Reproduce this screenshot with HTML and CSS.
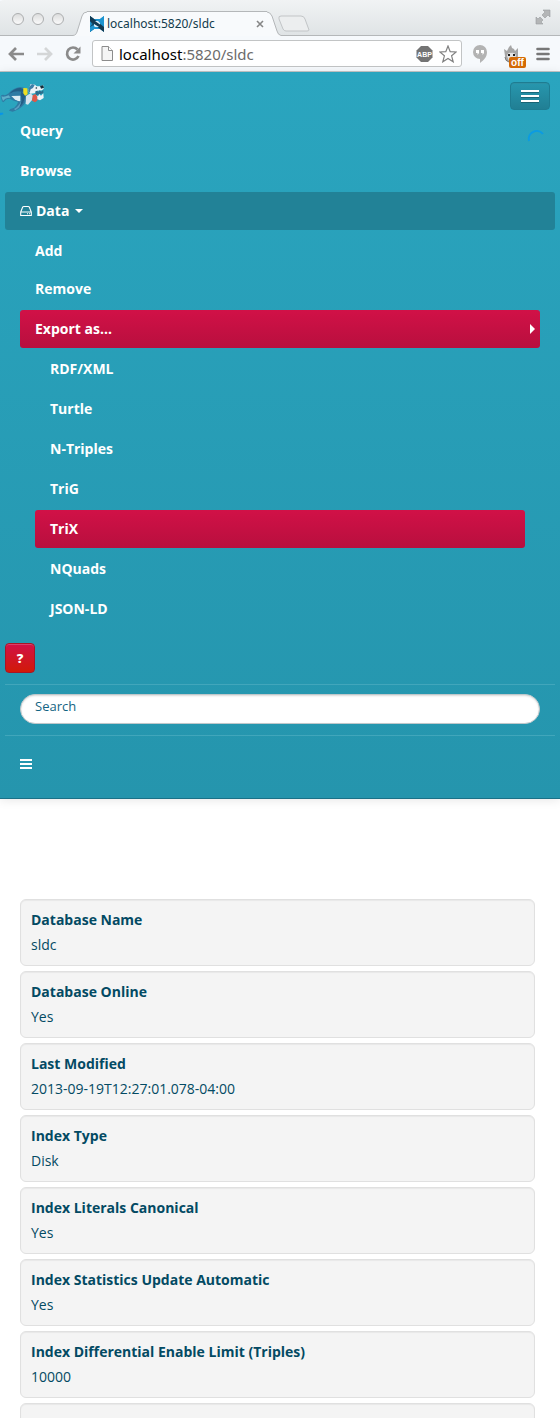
FILE: index.html
```html
<!DOCTYPE html>
<html lang="en">
<head>
<meta charset="utf-8">
<meta name="viewport" content="width=device-width, initial-scale=1">
<title>localhost:5820/sldc</title>
<link rel="stylesheet" href="styles.css">
</head>
<body>
<header class="chrome">
  <div class="tabstrip">
    <div class="lights"><span class="light"></span><span class="light"></span><span class="light"></span></div>
    <div class="tab">
      <svg class="tab-edge" width="14" height="25" viewBox="0 0 14 25"><path d="M0 25V24C3 24 3 23 4 21L9 5Q10 1 14 1V25Z" fill="#f8fafc"/><path d="M0 24.5C3 24 3 23 4 21L9 5Q10 1 14 1" fill="none" stroke="#b4b7b9"/></svg>
      <div class="tab-body">
        <svg width="14" height="16" viewBox="0 0 14 16"><path d="M0 0L4 3H10L14 0V16L10 13H4L0 16Z" fill="#1c94d0"/><path d="M0 0L4 3V13L0 16V11L2 8L0 5Z" fill="#14506f"/><path d="M4 3H10L14 0V4L10 6L7 5H4Z" fill="#1c94d0"/><path d="M0 0L4 3L14 11V16L10 13L4 8L0 5Z" fill="#123a52"/><path d="M5 5H8L10 7V8.500Z" fill="#d9effa"/><path d="M4 8L9 11H5L4 10Z" fill="#d9effa"/><path d="M0 11L4 9V13L0 16Z" fill="#1c94d0"/></svg>
        <span class="tab-title">localhost:5820/sldc</span>
        <button class="plain tab-close" aria-label="Close tab"><svg width="8" height="8" viewBox="0 0 8 8"><path d="M1 1L7 7M7 1L1 7" stroke="#868686" stroke-width="1.6"/></svg></button>
      </div>
      <svg class="tab-edge" width="14" height="25" viewBox="0 0 14 25"><path d="M0 1Q3 1 5 5L10 20Q11 24 14 24V25H0Z" fill="#f8fafc"/><path d="M0 1Q3 1 5 5L10 20Q11 24 14 24.500" fill="none" stroke="#b4b7b9"/></svg>
    </div>
    <button class="plain new-tab" aria-label="New tab"><svg width="34" height="18" viewBox="0 0 34 18"><path d="M4 1H24Q27 1 28 4L32 15Q32 16 30 16H9Q7 16 6 14L2 4Q1 1 4 1Z" fill="#eceeef" stroke="#c2c5c7"/></svg></button>
    <button class="plain expand" aria-label="Full screen"><svg width="16" height="16" viewBox="0 0 16 16" fill="#b4b6b7" stroke="#999c9e" stroke-width=".6"><path d="M8 1H15V8L13 6L10 9L7 6L10 3Z"/><path d="M1 8L3 10L5 8L8 11L6 13L8 15H1Z"/></svg></button>
  </div>
  <div class="toolbar">
    <button class="plain" aria-label="Back"><svg width="18" height="16" viewBox="0 0 18 16"><path d="M8 2L2 8L8 14M2 8H16" fill="none" stroke="#8b8b8b" stroke-width="2.700"/></svg></button>
    <button class="plain" aria-label="Forward"><svg width="18" height="16" viewBox="0 0 18 16"><path d="M9 2L15 8L9 14M15 8H1" fill="none" stroke="#d4d6d7" stroke-width="2.700"/></svg></button>
    <button class="plain" aria-label="Reload"><svg width="18" height="18" viewBox="0 0 18 18"><path d="M13.500 4.500A6 6 0 1 0 14.500 11" fill="none" stroke="#8b8b8b" stroke-width="2.700"/><path d="M16.500 1.500V8.500H9.500Z" fill="#8b8b8b"/></svg></button>
    <div class="omnibox">
      <svg width="12" height="15" viewBox="0 0 12 15"><path d="M1 .5H7.500L11.500 4.500V14.500H1Z" fill="#f5f5f5" stroke="#8c8c8c"/><path d="M7.500 .5V4.500H11.500" fill="#fff" stroke="#8c8c8c"/></svg>
      <span class="url"><b>localhost</b>:5820/sldc</span>
      <svg width="17" height="16" viewBox="0 0 17 16"><path d="M5 0H12L16.500 4.500V11.500L12 16H5L.5 11.500V4.500Z" fill="#747474"/><text x="8.500" y="11" class="abp">ABP</text></svg>
      <svg width="18" height="18" viewBox="0 0 18 18"><path d="M9 1L11.200 6.600L17.200 7L12.600 10.800L14.200 16.800L9 13.400L3.800 16.800L5.400 10.800L.8 7L6.800 6.600Z" fill="#fff" stroke="#808080" stroke-width="1.200"/></svg>
    </div>
    <div class="extensions">
      <button class="plain" aria-label="Hangouts"><svg width="14" height="18" viewBox="0 0 14 18"><path d="M7 0A7 7 0 0 1 14 7C14 12 11 15 7 18V14A7 7 0 0 1 7 0Z" fill="#b3b3b3"/><path d="M3 5H6V8L4.500 10V8H3ZM8 5H11V8L9.500 10V8H8Z" fill="#fff"/></svg></button>
      <button class="plain ext" aria-label="Extension off"><svg width="24" height="24" viewBox="0 0 24 24"><path d="M3 12L2 5L5 7L7 3L9 1L10 4L12 5L13 7L16 4V12Q16 18 9 18Q3 18 3 12Z" fill="#a6a6a6"/><path d="M5 12Q6 8 9 9Q13 8 14 12L12 17H7Z" fill="#e2e2e2"/><path d="M7 10V12M12 10V12" stroke="#222" stroke-width="2"/><path d="M3 13Q3 17 7 18" stroke="#777" fill="none"/><rect x="7" y="13" width="17" height="11" rx="2" fill="#d56b05"/><text x="15.500" y="22" class="off">off</text></svg></button>
      <button class="plain" aria-label="Chrome menu"><svg width="14" height="14" viewBox="0 0 14 14"><path d="M1.500 2H12.500M1.500 7H12.500M1.500 12H12.500" stroke="#777" stroke-width="2.600" stroke-linecap="round"/></svg></button>
    </div>
  </div>
</header>

<nav class="navbar">
  <div class="brandbar">
    <a href="#" class="brand" aria-label="Home"><svg width="47" height="37" viewBox="0 30 141 111">
      <path d="M0 128H9L10 133L0 136Z" fill="#0895e8"/>
      <path d="M2 78Q8 72 14 76Q20 74 26 70Q40 53 60 51L72 53L84 66L82 84L76 98Q66 114 46 122L38 125L27 122L31 117L43 113L51 104L54 95L43 93L29 86L19 88L10 97L6 94Z" fill="#2f7ba4"/>
      <path d="M28 71Q42 54 62 54L70 58L68 66Q48 60 28 71Z" fill="#235e86"/>
      <path d="M4 79Q13 82 26 76L32 83Q16 82 9 93Z" fill="#5fafc9"/>
      <path d="M34 78Q47 77 61 77L61 94L54 93L44 88Z" fill="#dcecf4"/>
      <path d="M42 117Q56 110 64 92L72 84Q72 104 46 121Z" fill="#5ca0c2"/>
      <path d="M64 64L76 78L70 98Q64 108 58 111Q68 90 62 74Z" fill="#235e86"/>
      <path d="M78 78L92 70L100 78L96 90L84 104L77 102Z" fill="#d7e5ef"/>
      <path d="M70 54L82 55L83 73L75 77L70 70Z" fill="#f0df20"/>
      <path d="M84 64L92 42L105 44L110 49H120L130 46L131 56L126 61L112 62L104 70L92 71Z" fill="#edf4f8"/>
      <path d="M88 50L96 42L104 45L99 54L92 58L89 68L84 64Z" fill="#3d7fa8"/>
      <path d="M106 64L112 62L115 67L119 61L124 65L130 60V70L108 76Z" fill="#2d6d8c"/>
      <path d="M108 76L114 79L118 72L123 77L130 70L131 84L120 91L110 87Z" fill="#edf4f8"/>
      <path d="M98 76L106 72L112 80V92L105 97L96 92Z" fill="#df5848"/>
      <path d="M120 48L129 46L132 53L123 56Z" fill="#152d3a"/>
      <circle cx="109" cy="54" r="2.500" fill="#152d3a"/>
    </svg></a>
    <button class="toggle" aria-label="Toggle navigation"><span></span><span></span><span></span></button>
  </div>
  <svg class="spinner" width="18" height="18" viewBox="0 0 18 18"><path d="M2 13A8 8 0 0 1 16 6" fill="none" stroke="#0b9be3" stroke-width="2"/></svg>
  <ul class="menu">
    <li><a href="#">Query</a></li>
    <li><a href="#">Browse</a></li>
    <li>
      <a href="#" class="open"><svg width="12" height="12" viewBox="0 0 12 12"><path d="M.7 7L2.500 2.500Q2.700 1.500 4 1.500H8Q9.300 1.500 9.500 2.500L11.300 7V10.500H.7ZM.7 7H11.300M7 8.800H8M9 8.800H10" fill="none" stroke="#fff" stroke-width="1.100"/></svg>Data<svg width="8" height="4" viewBox="0 0 8 4"><path d="M0 0H8L4 4Z" fill="#fff"/></svg></a>
      <ul class="submenu">
        <li><a href="#">Add</a></li>
        <li><a href="#">Remove</a></li>
        <li class="export">
          <a href="#" class="active">Export as...<svg class="arrow" width="5" height="10" viewBox="0 0 5 10"><path d="M0 0L5 5L0 10Z" fill="#fff"/></svg></a>
          <ul class="formats">
            <li><a href="#">RDF/XML</a></li>
            <li><a href="#">Turtle</a></li>
            <li><a href="#">N-Triples</a></li>
            <li><a href="#">TriG</a></li>
            <li><a href="#" class="active">TriX</a></li>
            <li><a href="#">NQuads</a></li>
            <li><a href="#">JSON-LD</a></li>
          </ul>
        </li>
      </ul>
    </li>
  </ul>
  <button class="help" aria-label="Help">?</button>
  <form class="search"><input type="text" placeholder="Search" aria-label="Search"></form>
  <button class="plain list" aria-label="More options"><svg width="12" height="10" viewBox="0 0 12 10"><path d="M0 1H12M0 5H12M0 9H12" stroke="#fff" stroke-width="2"/></svg></button>
</nav>

<main>
  <dl class="props">
    <div class="well"><dt>Database Name</dt><dd>sldc</dd></div>
    <div class="well"><dt>Database Online</dt><dd>Yes</dd></div>
    <div class="well"><dt>Last Modified</dt><dd>2013-09-19T12:27:01.078-04:00</dd></div>
    <div class="well"><dt>Index Type</dt><dd>Disk</dd></div>
    <div class="well"><dt>Index Literals Canonical</dt><dd>Yes</dd></div>
    <div class="well"><dt>Index Statistics Update Automatic</dt><dd>Yes</dd></div>
    <div class="well"><dt>Index Differential Enable Limit (Triples)</dt><dd>10000</dd></div>
    <div class="well"><dt></dt><dd></dd></div>
  </dl>
</main>
</body>
</html>
```
FILE: styles.css
```css
* { box-sizing: border-box; }
html { height: 100%; }
body {
  margin: 0;
  height: 100%;
  overflow: hidden;
  background: #fff;
  color: #034a63;
  font: 14px/20px "Open Sans", "Noto Sans", sans-serif;
}
ul, dl, dd { margin: 0; padding: 0; list-style: none; }
svg { display: block; flex: none; }
.plain { border: 0; padding: 0; background: none; display: block; flex: none; }

/* Browser frame */
.chrome { background: #f6f9fc; border-bottom: 1px solid #c3c5c6; font-family: "Noto Sans", sans-serif; }
.tabstrip {
  display: flex;
  align-items: flex-end;
  height: 36px;
  padding: 0 9px 0 12px;
  background: linear-gradient(#f1f3f4, #dfe3e5);
  box-shadow: inset 0 -1px #b4b7b9;
  border-radius: 4px 4px 0 0;
}
.lights { display: flex; gap: 8px; align-self: center; padding-top: 2px; }
.light { width: 12px; height: 12px; border: 1px solid #acaeaf; border-radius: 50%; background: linear-gradient(#dcdddd, #fafafa); }
.tab { display: flex; width: 208px; margin-left: 9px; }
.tab-body { flex: 1; display: flex; align-items: center; gap: 3px; height: 25px; min-width: 0; background: #f8fafc; border-top: 1px solid #b4b7b9; padding-left: 3px; }
.tab-title { flex: 1; font-size: 12px; color: #123c4d; white-space: nowrap; }
.tab-close { margin-right: 3px; }
.new-tab { margin: 0 0 3px -4px; }
.expand { margin: 0 0 11px auto; }
.toolbar { display: flex; align-items: center; gap: 10px; height: 35px; padding: 0 10px 0 8px; }
.omnibox {
  flex: 1;
  display: flex;
  align-items: center;
  gap: 6px;
  height: 27px;
  padding: 0 4px 0 8px;
  background: #fff;
  border: 1px solid #c2c4c5;
  border-radius: 3px;
}
.url { flex: 1; font-size: 15px; color: #6b6b6b; }
.url b { font-weight: 400; color: #000; }
.abp { font: 700 7px "Liberation Sans", sans-serif; fill: #fff; text-anchor: middle; }
.off { font: 700 10px "Liberation Sans", sans-serif; fill: #fff; text-anchor: middle; }
.extensions { display: flex; align-items: center; gap: 10px; padding-left: 1px; }
.ext { margin: 4px 0 0 5px; }

/* Navigation */
.navbar {
  position: relative;
  padding: 10px 5px 24px;
  background: linear-gradient(#2aa5bf, #2595ad);
  border-bottom: 1px solid #1b7187;
  box-shadow: 0 1px 10px rgba(0, 0, 0, .1);
}
.brandbar { display: flex; justify-content: space-between; height: 30px; }
.brand { margin: -2px 0 0 -5px; }
.toggle {
  display: flex;
  flex-direction: column;
  align-items: center;
  justify-content: center;
  gap: 3px;
  width: 40px;
  height: 28px;
  margin-right: 5px;
  padding: 0;
  border: 1px solid #1e7c91;
  border-radius: 4px;
  background: linear-gradient(#2797ae, #217f94);
  box-shadow: inset 0 1px #2d90a5;
}
.toggle span { width: 18px; height: 2px; background: #fff; box-shadow: 0 1px rgba(0, 0, 0, .25); }
.spinner { position: absolute; top: 56px; right: 15px; }
.menu a {
  display: flex;
  align-items: center;
  gap: 4px;
  height: 38px;
  padding: 0 15px;
  border-radius: 3px;
  color: #fff;
  font-weight: 700;
  text-decoration: none;
}
.menu > li + li, .submenu, .formats li { margin-top: 2px; }
.menu .open { background: #228297; }
.menu .open svg:last-child { margin-left: 2px; }
.submenu, .formats { padding: 0 15px; }
.export { margin-top: 2px; }
.menu .active { background: linear-gradient(#d11147, #b80f3e); }
.arrow { margin: 0 -10px 0 auto; }
.help {
  display: block;
  width: 30px;
  height: 30px;
  margin: 15px 0 11px;
  padding: 0;
  border: 1px solid #a91425;
  border-radius: 4px;
  background: linear-gradient(#d11147, #d11a08);
  box-shadow: inset 0 1px rgba(255, 255, 255, .2);
  color: #fff;
  font: 800 13px/20px "Open Sans", sans-serif;
}
.search {
  padding: 9px 15px 11px;
  border-top: 1px solid #41a6bb;
  border-bottom: 1px solid #41a6bb;
}
.search input {
  display: block;
  width: 100%;
  height: 30px;
  padding: 0 14px 6px;
  border: 1px solid #bfc7ca;
  border-radius: 15px;
  background: #fff;
  box-shadow: inset 0 1px 2px rgba(0, 0, 0, .15);
  color: #136483;
  font: 13px/20px "Open Sans", sans-serif;
}
.search input::placeholder { color: #136483; opacity: 1; }
.list { margin: 23px 15px 5px; }

/* Database properties */
.props { display: grid; gap: 5px; margin: 100px 25px 0 20px; }
.well {
  min-height: 67px;
  padding: 7px 10px 8px;
  border: 1px solid #e0e0e0;
  border-radius: 6px;
  background: #f4f4f4;
  box-shadow: inset 0 1px 1px rgba(0, 0, 0, .05);
  line-height: 25px;
}
.well dt { font-weight: 700; }
```
